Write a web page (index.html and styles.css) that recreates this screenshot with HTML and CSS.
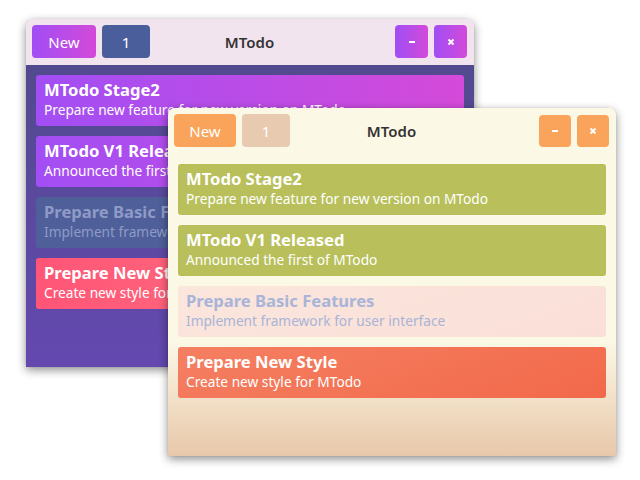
FILE: index.html
```html
<!DOCTYPE html>
<html>
<head>
<meta charset="utf-8">
<link rel="stylesheet" href="styles.css">
</head>
<body>
<div class="desktop">
  <div class="window purple w1">
    <div class="titlebar">
      <button class="btn btn-new">New</button>
      <button class="btn btn-count">1</button>
      <div class="title">MTodo</div>
      <button class="btn btn-icon"><svg width="8" height="8" viewBox="0 0 8 8"><rect x="1" y="3" width="6" height="2" fill="#fff"/></svg></button>
      <button class="btn btn-icon"><svg width="8" height="8" viewBox="0 0 8 8"><path d="M1.5 1.5L6.5 6.5M6.5 1.5L1.5 6.5" stroke="#fff" stroke-width="2"/></svg></button>
    </div>
    <div class="body">
      <div class="card c1"><div class="ct">MTodo Stage2</div><div class="cs">Prepare new feature for new version on MTodo</div></div>
      <div class="card c2"><div class="ct">MTodo V1 Released</div><div class="cs">Announced the first of MTodo</div></div>
      <div class="card c3"><div class="ct">Prepare Basic Features</div><div class="cs">Implement framework for user interface</div></div>
      <div class="card c4"><div class="ct">Prepare New Style</div><div class="cs">Create new style for MTodo</div></div>
    </div>
  </div>
  <div class="window cream w2">
    <div class="titlebar">
      <button class="btn btn-new">New</button>
      <button class="btn btn-count">1</button>
      <div class="title">MTodo</div>
      <button class="btn btn-icon"><svg width="8" height="8" viewBox="0 0 8 8"><rect x="1" y="3" width="6" height="2" fill="#fff"/></svg></button>
      <button class="btn btn-icon"><svg width="8" height="8" viewBox="0 0 8 8"><path d="M1.5 1.5L6.5 6.5M6.5 1.5L1.5 6.5" stroke="#fff" stroke-width="2"/></svg></button>
    </div>
    <div class="body">
      <div class="card c1"><div class="ct">MTodo Stage2</div><div class="cs">Prepare new feature for new version on MTodo</div></div>
      <div class="card c2"><div class="ct">MTodo V1 Released</div><div class="cs">Announced the first of MTodo</div></div>
      <div class="card c3"><div class="ct">Prepare Basic Features</div><div class="cs">Implement framework for user interface</div></div>
      <div class="card c4"><div class="ct">Prepare New Style</div><div class="cs">Create new style for MTodo</div></div>
    </div>
  </div>
</div>
</body>
</html>
```
FILE: styles.css
```css
html, body {
  margin: 0;
  padding: 0;
  background: #ffffff;
}
body {
  font-family: "Noto Sans", "Open Sans", sans-serif;
}
.desktop {
  position: relative;
  width: 640px;
  height: 480px;
  overflow: hidden;
}
.window {
  position: absolute;
  width: 448px;
  height: 348px;
  border-radius: 7px 7px 0 0;
  overflow: hidden;
  display: flex;
  flex-direction: column;
  box-shadow: 0 3px 10px rgba(0,0,0,0.45), 0 0 1px rgba(0,0,0,0.2);
}
.w1 { left: 26px; top: 19px; }
.w2 { left: 168px; top: 108px; }

.titlebar {
  height: 46px;
  box-sizing: border-box;
  padding: 6px 7px 7px 6px;
  display: flex;
  align-items: stretch;
  gap: 6px;
}
.title {
  flex: 1;
  display: flex;
  align-items: center;
  justify-content: center;
  font-size: 15px;
  font-weight: 600;
  color: #333;
  padding-right: 46px;
}
.btn {
  border: none;
  border-radius: 4px;
  color: #fff;
  font-family: inherit;
  font-size: 15px;
  padding: 0;
  display: flex;
  align-items: center;
  justify-content: center;
}
.btn-new { width: 64px; }
.btn-count { width: 48px; }
.btn-icon { width: 33px; }

.body {
  flex: 1;
  padding: 10px;
  display: flex;
  flex-direction: column;
  gap: 10px;
}
.card {
  height: 51px;
  box-sizing: border-box;
  border-radius: 3px;
  padding: 5px 8px 0 8px;
  color: #fff;
}
.ct {
  font-size: 16.6px;
  font-weight: 700;
  line-height: 20px;
}
.cs {
  font-size: 13.7px;
  line-height: 20px;
}

/* purple theme */
.purple .titlebar { background: #f1e4ef; }
.purple .btn-new,
.purple .btn-icon { background: linear-gradient(90deg, #a14ef5, #d349d9); }
.purple .btn-count { background: #4a5e9c; }
.purple .body { background: linear-gradient(180deg, #524a8e, #6448b0); }
.purple .c1,
.purple .c2 { background: linear-gradient(90deg, #a24ef4, #d44ad9); }
.purple .c3 { background: #4e5f9a; color: #8f9bc6; }
.purple .c4 { background: linear-gradient(90deg, #ff5577, #ff7d83); }

/* cream theme */
.cream .titlebar { background: #fbf8e6; }
.cream .btn-new { width: 62px; }
.cream .btn-new,
.cream .btn-icon { background: #f9a45a; }
.cream .btn-icon { margin-top: 1px; width: 32px; }
.cream .btn-count { background: #e8cab0; }
.cream .body { background: linear-gradient(180deg, #fbf8e6 0%, #fbf8e6 62%, #e8c8aa 100%); }
.cream .c1,
.cream .c2 { background: #b8bf5b; }
.cream .c3 { background: linear-gradient(160deg, #fbe6dc, #fadfd8); color: #a8b4d8; }
.cream .c4 { background: linear-gradient(160deg, #f57f62, #f2694a); }
```
